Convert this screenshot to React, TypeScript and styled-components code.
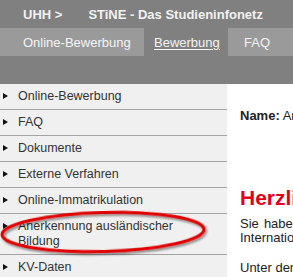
import React from 'react';
import styled, {createGlobalStyle} from 'styled-components';

const GlobalStyle = createGlobalStyle`
  html, body {
    margin: 0;
    padding: 0;
    overflow: hidden;
    background: #ffffff;
  }
  body {
    font-family: "Liberation Sans", Arial, sans-serif;
  }
`;

const menu = [
  'Online-Bewerbung',
  'FAQ',
  'Dokumente',
  'Externe Verfahren',
  'Online-Immatrikulation',
  'Anerkennung ausländischer Bildung',
  'KV-Daten',
];

const App: React.FC = () => {
  return (
    <Page>
      <GlobalStyle />
      <Header>
        <Crumb>UHH &gt;</Crumb>
        <Crumb $gap={26}>STiNE - Das Studieninfonetz</Crumb>
      </Header>
      <TabBar>
        <Tab $width={144} $pad={23}>Online-Bewerbung</Tab>
        <Tab $active $width={84} $pad={10}>Bewerbung</Tab>
        <Tab $pad={16} $grow>FAQ</Tab>
      </TabBar>
      <Strip />
      <Body>
        <Sidebar>
          {menu.map((item) => (
            <MenuRow key={item}>
              <Arrow />
              <MenuText>{item}</MenuText>
            </MenuRow>
          ))}
        </Sidebar>
        <Main>
          <NameLine>
            <b>Name:</b> Anna Musterfrau
          </NameLine>
          <Heading>Herzlich willkommen</Heading>
          <Para>
            Sie haben sich erfolgreich registriert und können sich nun über das International Office bewerben.
          </Para>
          <Para>Unter den folgenden Menüpunkten finden Sie weitere Hinweise.</Para>
        </Main>
      </Body>
      <Mark viewBox="0 0 293 277" width="293" height="277">
        <defs>
          <filter id="shade" x="-10%" y="-50%" width="120%" height="200%">
            <feDropShadow dx="1.5" dy="2" stdDeviation="1.2" floodColor="#000" floodOpacity="0.45" />
          </filter>
        </defs>
        <ellipse
          cx="103"
          cy="232"
          rx="101"
          ry="19.5"
          transform="rotate(-1.5 103 232)"
          fill="none"
          stroke="#e00000"
          strokeWidth="3"
          filter="url(#shade)"
        />
      </Mark>
    </Page>
  );
};
export default App;

const Page = styled.div`
  position: relative;
  width: 293px;
  height: 277px;
  overflow: hidden;
`;

const Header = styled.div`
  height: 28px;
  display: flex;
  align-items: center;
  padding-left: 23px;
  background: #808080;
`;

const Crumb = styled.span<{$gap?: number}>`
  margin-left: ${(p) => p.$gap || 0}px;
  font-size: 13px;
  font-weight: bold;
  color: #f2f2f2;
  white-space: nowrap;
`;

const TabBar = styled.div`
  height: 28px;
  display: flex;
  background: #808080;
`;

const Tab = styled.div<{$active?: boolean; $width?: number; $pad: number; $grow?: boolean}>`
  box-sizing: border-box;
  ${(p) => (p.$width ? `width: ${p.$width}px;` : '')}
  ${(p) => (p.$grow ? 'flex: 1;' : '')}
  display: flex;
  align-items: center;
  padding-left: ${(p) => p.$pad}px;
  font-size: 13px;
  color: #f4f4f4;
  white-space: nowrap;
  background: ${(p) => (p.$active ? '#808080' : '#9a9a9a')};
  text-decoration: ${(p) => (p.$active ? 'underline' : 'none')};
  text-underline-offset: 2px;
`;

const Strip = styled.div`
  height: 28px;
  background: #808080;
`;

const Body = styled.div`
  display: flex;
`;

const Sidebar = styled.div`
  width: 227px;
  flex-shrink: 0;
  background: #f0f0f0;
`;

const MenuRow = styled.div`
  display: flex;
  align-items: flex-start;
  padding: 5px 0;
  border-bottom: 1px solid #a3a3a3;
`;

const Arrow = styled.span`
  flex-shrink: 0;
  width: 0;
  height: 0;
  margin: 4px 0 0 3px;
  border-left: 5px solid #111;
  border-top: 3.5px solid transparent;
  border-bottom: 3.5px solid transparent;
`;

const MenuText = styled.span`
  margin-left: 10px;
  padding-right: 20px;
  font-size: 12.5px;
  line-height: 15px;
  color: #333;
`;

const Main = styled.div`
  width: 420px;
  flex-shrink: 0;
  padding: 24px 0 0 13px;
  color: #222;
`;

const NameLine = styled.div`
  font-size: 13px;
  line-height: 15px;
  white-space: nowrap;
`;

const Heading = styled.h1`
  margin: 62px 0 0;
  font-size: 21px;
  line-height: 26px;
  font-weight: bold;
  color: #e2001a;
  white-space: nowrap;
`;

const Para = styled.p`
  margin: 6px 0 0;
  width: 400px;
  font-size: 13px;
  line-height: 14px;
  text-align: justify;

  & + & {
    margin-top: 16px;
  }
`;

const Mark = styled.svg`
  position: absolute;
  top: 0;
  left: 0;
  pointer-events: none;
`;
